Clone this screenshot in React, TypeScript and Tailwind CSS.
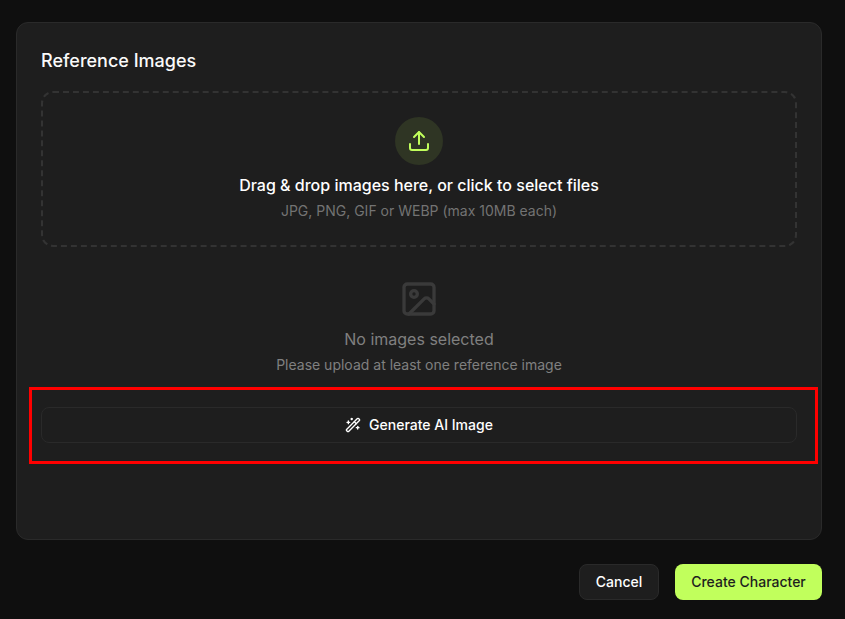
import { ImageIcon, Upload, WandSparkles } from 'lucide-react'

export default function App() {
  return (
    <div className="relative min-h-[619px] bg-[#0f0f0f] pt-[22px] pr-[23px] pl-4 font-['Inter',sans-serif] text-white">
      <div className="h-[518px] rounded-xl border border-[#2a2a2a] bg-[#1e1e1e] p-6">
        <h2 className="text-lg leading-7 font-medium text-[#fafafa]">Reference Images</h2>

        <div className="mt-[16px] flex h-[156px] flex-col items-center rounded-xl border-2 border-dashed border-[#333333] pt-6">
          <div className="flex h-12 w-12 items-center justify-center rounded-full bg-[#2f3524]">
            <Upload className="h-6 w-6 text-[#c1ff5c]" strokeWidth={2} />
          </div>
          <p className="mt-2 text-base leading-6 font-medium text-[#ffffff]">Drag &amp; drop images here, or click to select files</p>
          <p className="mt-1 text-sm leading-5 text-[#737373]">JPG, PNG, GIF or WEBP (max 10MB each)</p>
        </div>

        <div className="mt-8 flex flex-col items-center">
          <ImageIcon className="h-10 w-10 text-[#3a3a3a]" strokeWidth={2} />
          <p className="mt-2 text-base leading-6 text-[#808080]">No images selected</p>
          <p className="mt-[4px] text-sm leading-5 text-[#808080]">Please upload at least one reference image</p>
        </div>

        <button className="mt-[32px] flex h-9 w-full items-center justify-center gap-2 rounded-lg border border-[#2a2a2a] bg-[#1e1e1e] text-sm font-medium text-[#ffffff]">
          <WandSparkles className="h-4 w-4" strokeWidth={2} />
          Generate AI Image
        </button>
      </div>

      <div className="mt-6 flex justify-end gap-4">
        <button className="h-9 w-20 rounded-lg border border-[#2a2a2a] bg-[#1e1e1e] text-sm font-medium text-[#ffffff]">Cancel</button>
        <button className="h-9 w-[147px] rounded-lg bg-[#c1ff5c] text-sm font-medium text-[#1e1e1e]">Create Character</button>
      </div>

      {/* red annotation box from the screenshot */}
      <div className="pointer-events-none absolute top-[387px] left-[29px] h-[77px] w-[789px] border-[3px] border-[#ff0000]" />
    </div>
  )
}
